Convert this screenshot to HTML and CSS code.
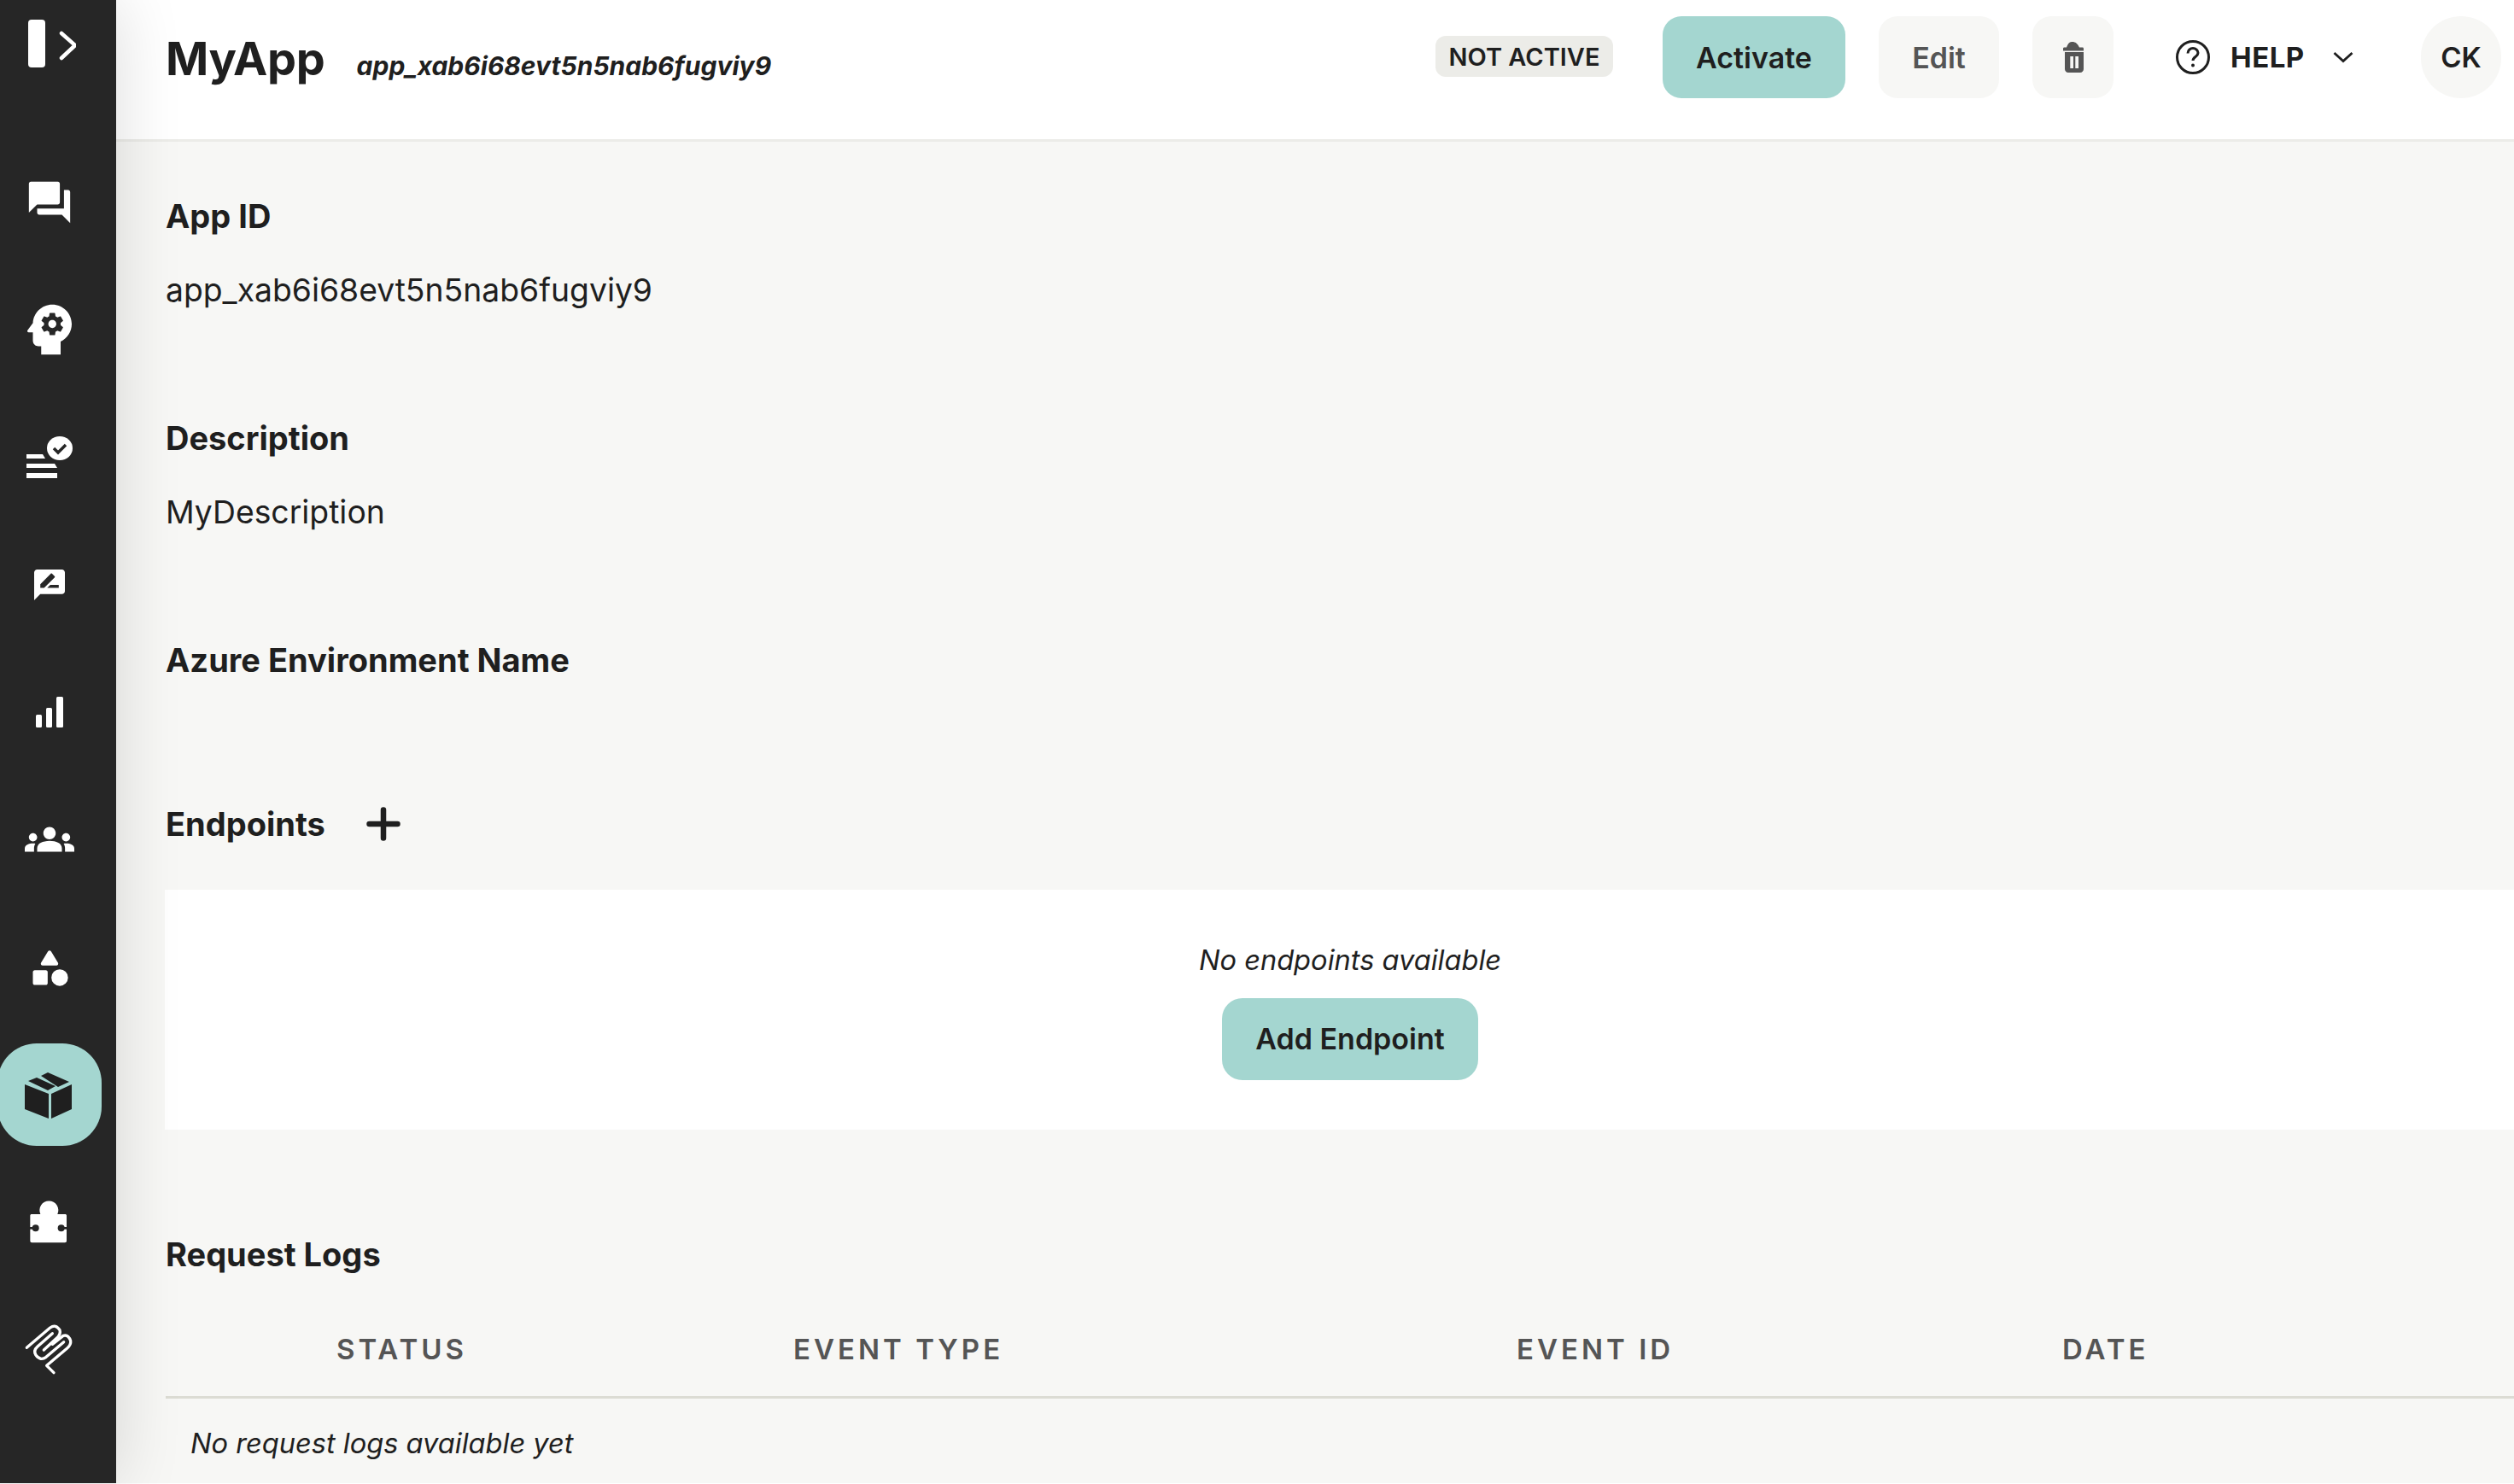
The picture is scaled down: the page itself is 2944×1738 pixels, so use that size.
FILE: index.html
```html
<!DOCTYPE html>
<html lang="en">
<head>
<meta charset="utf-8">
<title>MyApp</title>
<link rel="stylesheet" href="styles.css">
</head>
<body>
<div class="shell">
  <nav class="sidebar">
    <div class="toggle">
      <svg width="56" height="56" viewBox="0 0 56 56"><rect x="0" y="0" width="20" height="56" rx="4" fill="#fff"/><path d="M39 16l16 14-16 15" fill="none" stroke="#fff" stroke-width="4.500" stroke-linecap="round" stroke-linejoin="round"/></svg>
    </div>
    <div class="nav-item"><svg class="mi" viewBox="0 0 24 24"><path d="M21 6h-2v9H6v2c0 .55.45 1 1 1h11l4 4V7c0-.55-.45-1-1-1zm-4 6V3c0-.55-.45-1-1-1H3c-.55 0-1 .45-1 1v14l4-4h10c.55 0 1-.45 1-1z"/></svg></div>
    <div class="nav-item"><svg class="mi-psy" viewBox="0 0 24 24"><path d="M13 8.570c-.79 0-1.430.64-1.430 1.430s.64 1.430 1.430 1.430 1.430-.64 1.430-1.430-.64-1.430-1.430-1.430z"/><path d="M13 3C9.250 3 6.200 5.940 6.020 9.640L4.100 12.200c-.25.33-.01.8.4.8H6v3c0 1.100.9 2 2 2h1v3h7v-4.680c2.360-1.120 4-3.530 4-6.320 0-3.870-3.130-7-7-7zm3 7c0 .13-.01.26-.03.39l.83.66c.08.06.1.16.05.25l-.8 1.390c-.05.09-.16.12-.24.09l-.99-.4c-.21.16-.43.29-.67.39L14 13.830c-.01.1-.1.17-.2.17h-1.600c-.1 0-.18-.07-.2-.17l-.15-1.060c-.25-.1-.47-.23-.68-.39l-.99.4c-.09.03-.2 0-.25-.09l-.8-1.390c-.05-.08-.03-.19.05-.25l.84-.66c-.01-.13-.02-.26-.02-.39s.02-.27.04-.39l-.85-.66c-.08-.06-.1-.16-.05-.26l.8-1.380c.05-.09.15-.12.24-.09l1 .4c.2-.15.43-.29.67-.39L12 6.170c.02-.1.1-.17.2-.17h1.600c.1 0 .18.07.2.17l.15 1.060c.24.1.46.23.67.39l1-.4c.09-.03.2 0 .24.09l.8 1.380c.05.09.03.2-.05.26l-.85.66c.03.12.04.25.04.39z"/></svg></div>
    <div class="nav-item"><svg class="ic-tasks" viewBox="0 0 54 50"><path d="M0 21h19l3 5H0zM0 32h33l3 5H0zM0 43h36v6H0z" fill="#fff"/><ellipse cx="39" cy="14" rx="15" ry="14" fill="#fff"/><path d="M32 14l5 5 9-9" fill="none" stroke="#262626" stroke-width="3.500"/></svg></div>
    <div class="nav-item"><svg class="mi-review" viewBox="2 2 20 20"><path d="M20 2H4c-1.100 0-1.990.9-1.990 2L2 22l4-4h14c1.100 0 2-.9 2-2V4c0-1.100-.9-2-2-2zM6 14v-2.470l6.880-6.880c.2-.2.51-.2.71 0l1.770 1.770c.2.2.2.51 0 .71L8.470 14H6zm12 0h-7.500l2-2H18v2z"/></svg></div>
    <div class="nav-item"><svg class="ic-bars" viewBox="0 0 32 36"><rect x="0" y="21" width="7" height="15" rx="1.500"/><rect x="12" y="13" width="7" height="23" rx="1.500"/><rect x="24" y="0" width="8" height="36" rx="1.500"/></svg></div>
    <div class="nav-item"><svg class="mi" viewBox="0 0 24 24"><path d="M12 12.750c1.630 0 3.070.39 4.240.9 1.080.48 1.760 1.560 1.760 2.730V18H6v-1.610c0-1.180.68-2.260 1.760-2.730 1.170-.52 2.610-.91 4.240-.91zM4 13c1.100 0 2-.9 2-2s-.9-2-2-2-2 .9-2 2 .9 2 2 2zm1.130 1.100c-.37-.06-.74-.1-1.130-.1-.99 0-1.930.21-2.780.58C.48 14.900 0 15.620 0 16.430V18h4.500v-1.610c0-.83.23-1.610.63-2.290zM20 13c1.100 0 2-.9 2-2s-.9-2-2-2-2 .9-2 2 .9 2 2 2zm4 3.430c0-.81-.48-1.530-1.220-1.850-.85-.37-1.790-.58-2.780-.58-.39 0-.76.04-1.130.1.4.68.63 1.460.63 2.290V18H24v-1.570zM12 6c1.660 0 3 1.340 3 3s-1.340 3-3 3-3-1.340-3-3 1.340-3 3-3z"/></svg></div>
    <div class="nav-item"><svg class="mi-cat" viewBox="0 0 24 24"><path d="M11.150 3.400L7.430 9.480c-.41.66.07 1.520.85 1.520h7.430c.78 0 1.260-.86.85-1.520L12.850 3.400c-.39-.64-1.310-.64-1.700 0z"/><circle cx="17.500" cy="17.500" r="4.500"/><path d="M4 21.500h6c.55 0 1-.45 1-1v-6c0-.55-.45-1-1-1H4c-.55 0-1 .45-1 1v6c0 .55.45 1 1 1z"/></svg></div>
    <div class="nav-item active"><svg class="ic-box" viewBox="0 0 80 80"><path d="M11 28l28 11v29L11 57zM42 39l24-11v29L42 68zM15 24l10-4 22 10-9 5zM30 18l8-4 25 11-13 6z"/></svg></div>
    <div class="nav-item"><svg class="ic-puzzle" viewBox="0 0 240 210"><path d="M58 78h30a33 33 0 1 1 60 0h26c4 0 6 2 6 6v88c0 4-2 6-6 6H58c-4 0-6-2-6-6V84c0-4 2-6 6-6z"/><g class="cut"><circle cx="71" cy="127" r="12"/><rect x="50" y="123" width="20" height="8"/><circle cx="161" cy="127" r="12"/><rect x="162" y="123" width="20" height="8"/></g></svg></div>
    <div class="nav-item"><svg class="ic-clip" viewBox="0 0 240 240"><g fill="none" stroke="#fff" stroke-width="10" stroke-linecap="round" stroke-linejoin="round"><path d="M40 112L122 42Q142 28 156 50Q160 64 148 76L100 120"/><path d="M130 62L78 108Q62 122 72 138Q88 160 108 145L170 92"/><path d="M130 100L168 70Q186 64 194 88Q196 102 182 114L110 175L135 200"/></g></svg></div>
  </nav>
  <div class="main">
    <header class="topbar">
      <h1 class="title">MyApp</h1>
      <span class="app-id">app_xab6i68evt5n5nab6fugviy9</span>
      <span class="badge">NOT ACTIVE</span>
      <button class="btn btn-primary activate">Activate</button>
      <button class="btn btn-muted edit">Edit</button>
      <button class="btn btn-muted trash"><svg width="24" height="36" viewBox="0 0 24 36"><path d="M4 6.500C6 1 8 0 11 0s6 2 8 6.500h3.500c1 0 1.500.6 1.500 1.500v2.500H0V8c0-1 .6-1.500 1.500-1.500z" fill="#555"/><path fill-rule="evenodd" d="M2 12h22v20c0 2.200-1.800 4-4 4H6c-2.200 0-4-1.800-4-4zM8.300 17v14H12V17zM14.300 17v14H18V17z" fill="#555"/></svg></button>
      <div class="help">
        <svg width="42" height="42" viewBox="0 0 42 42"><circle cx="21" cy="21" r="18.500" fill="none" stroke="#1f1f1f" stroke-width="3"/><path d="M15 16.500c0-3.500 2.800-6 6-6s6 2.500 6 5.500c0 4.500-6 4.500-6 9" fill="none" stroke="#1f1f1f" stroke-width="3"/><circle cx="21" cy="30.500" r="2" fill="#1f1f1f"/></svg>
        <span class="help-label">HELP</span>
        <svg class="chev" width="24" height="14" viewBox="0 0 24 14"><path d="M1.500 2L12 11.500 22.500 2" fill="none" stroke="#1f1f1f" stroke-width="2.800"/></svg>
      </div>
      <div class="avatar">CK</div>
    </header>
    <section class="content">
      <div class="field field-id">
        <h2 class="label">App ID</h2>
        <p class="value">app_xab6i68evt5n5nab6fugviy9</p>
      </div>
      <div class="field field-desc">
        <h2 class="label">Description</h2>
        <p class="value">MyDescription</p>
      </div>
      <div class="field field-azure">
        <h2 class="label">Azure Environment Name</h2>
      </div>
      <div class="endpoints-head">
        <h2 class="label">Endpoints</h2>
        <svg width="40" height="40" viewBox="0 0 40 40"><path d="M20 3.500v33M3.500 20h33" stroke="#1f1f1f" stroke-width="6.500" stroke-linecap="round"/></svg>
      </div>
      <div class="card">
        <p class="empty">No endpoints available</p>
        <button class="btn btn-primary add">Add Endpoint</button>
      </div>
      <h2 class="label logs-title">Request Logs</h2>
      <div class="table-head">
        <span>STATUS</span><span>EVENT TYPE</span><span>EVENT ID</span><span>DATE</span>
      </div>
      <p class="empty logs-empty">No request logs available yet</p>
    </section>
  </div>
</div>
</body>
</html>
```
FILE: styles.css
```css
* { box-sizing: border-box; }
html, body { margin: 0; height: 100%; overflow: hidden; background: #fff; }
body { font-family: Inter, "Liberation Sans", sans-serif; color: #1f1f1f; }
h1, h2, p { margin: 0; }
.shell { display: flex; height: 1737px; }
.sidebar {
  width: 136px; flex: none; background: #262626; display: flex; flex-direction: column;
  padding-right: 17px; position: relative; z-index: 2;
  box-shadow: 0 0 80px rgba(0,0,0,.14);
}
.toggle { height: 177px; padding: 23px 0 0 33px; flex: none; }
.toggle svg { display: block; }
.nav-item { height: 120px; margin-bottom: 29.300px; padding-right: 3px; display: flex; align-items: center; justify-content: center; fill: #fff; flex: none; }
.nav-item.active { background: #a4d6d0; border-radius: 46px; fill: #1f1f1f; margin-left: -3px; padding-right: 0; }
.cut { fill: #262626; }
.mi { width: 58px; height: 58px; }
.mi-psy { width: 78px; height: 78px; }
.mi-review { width: 36px; height: 36px; }
.mi-cat { width: 52px; height: 52px; }
.ic-tasks { width: 54px; height: 50px; }
.ic-bars { width: 32px; height: 36px; }
.ic-box { width: 80px; height: 80px; }
.ic-puzzle { width: 80px; height: 70px; }
.ic-clip { width: 80px; height: 80px; }
.main { flex: 1; min-width: 0; display: flex; flex-direction: column; background: #f7f7f5; }
.topbar { height: 166px; flex: none; background: #fff; border-bottom: 3px solid #ecece8; display: flex; align-items: flex-start; padding: 19px 15px 0 58px; }
.title { font-size: 54px; font-weight: 700; line-height: 68px; margin-top: 16px; letter-spacing: -0.3px; }
.app-id { font-size: 30px; font-weight: 700; font-style: italic; line-height: 40px; margin: 38px 0 0 37px; }
.badge { margin-left: auto; margin-top: 23px; height: 48px; width: 208px; background: #ecece8; border-radius: 12px; font-size: 29px; font-weight: 600; display: flex; align-items: center; justify-content: center; }
.btn { font-family: inherit; border: 0; height: 96px; padding: 0; display: inline-flex; align-items: center; justify-content: center; font-size: 34px; font-weight: 600; color: #1f1f1f; border-radius: 22px; }
.btn-primary { background: #a4d6d0; }
.btn-muted { background: #f7f7f5; color: #555; }
.activate { width: 214px; margin-left: 58px; }
.edit { width: 141px; margin-left: 39px; }
.trash { width: 95px; margin-left: 39px; }
.help { display: flex; align-items: center; height: 96px; margin-left: 72px; width: 288px; }
.help-label { font-size: 33px; font-weight: 700; margin-left: 23px; letter-spacing: 0.5px; }
.chev { margin-left: 33px; }
.avatar { width: 94px; height: 96px; border-radius: 47px; background: #f7f7f5; font-size: 33px; font-weight: 600; display: flex; align-items: center; justify-content: center; }
.content { flex: 1; padding: 0 0 0 58px; overflow: hidden; }
.label { font-size: 38px; font-weight: 700; line-height: 46px; }
.value { font-size: 37.300px; font-weight: 400; line-height: 46px; margin-top: 41px; }
.field-id { padding-top: 64px; }
.field-desc { padding-top: 127px; }
.field-azure { padding-top: 127px; }
.endpoints-head { display: flex; align-items: center; gap: 48px; margin-top: 146px; height: 46px; }
.card { background: #fff; margin: 54px -25px 0 -1px; height: 281px; padding-top: 61px; display: flex; flex-direction: column; align-items: center; }
.empty { font-size: 32.600px; font-style: italic; line-height: 42px; }
.add { width: 300px; margin-top: 24px; padding-bottom: 2px; border-radius: 24px; }
.logs-title { margin-top: 123px; }
.table-head { display: grid; grid-template-columns: 535px 847px 639px 1fr; padding: 0 0 2px 200px; height: 112px; margin-top: 34px; align-items: center; border-bottom: 3px solid #dcdcd4; font-size: 33px; font-weight: 600; letter-spacing: 4px; color: #555; }
.logs-empty { padding: 31px 0 0 29px; }
```
